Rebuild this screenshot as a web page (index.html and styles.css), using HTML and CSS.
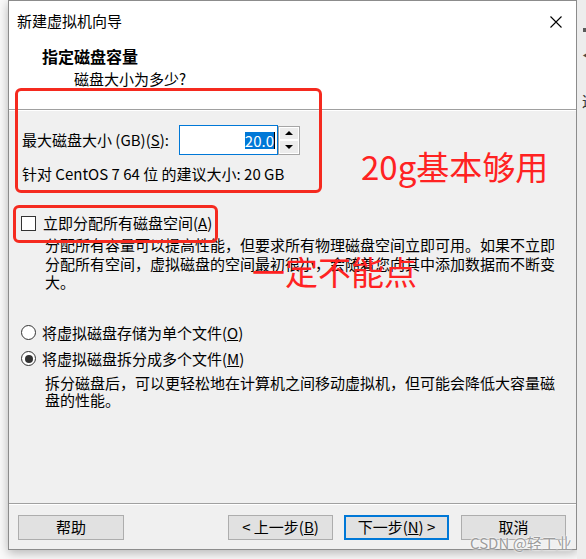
FILE: index.html
```html
<!DOCTYPE html>
<html lang="zh-CN">
<head>
    <meta charset="UTF-8">
    <meta name="viewport" content="width=device-width, initial-scale=1.0">
    <title>新建虚拟机向导</title>
    <link rel="stylesheet" href="styles.css">
</head>
<body>
    <div class="screen">
        <div class="dialog">
            <div class="titlebar">
                <span class="title">新建虚拟机向导</span>
                <svg class="close" width="12" height="12" viewBox="0 0 12 12">
                    <path d="M0.5 0.5L11.5 11.5M11.5 0.5L0.5 11.5" stroke="#000" stroke-width="1.1" fill="none"/>
                </svg>
            </div>
            <div class="header">
                <div class="heading">指定磁盘容量</div>
                <div class="subheading">磁盘大小为多少?</div>
            </div>

            <div class="content">
                <div class="size-row">
                    <span class="size-label">最大磁盘大小 (GB)(<u>S</u>):</span>
                    <div class="spin-input">
                        <span class="selected">20.0</span><span class="caret"></span>
                    </div>
                    <div class="spin-buttons">
                        <span class="spin-btn"><span class="arrow up"></span></span>
                        <span class="spin-btn"><span class="arrow down"></span></span>
                    </div>
                </div>
                <div class="hint">针对 CentOS 7 64 位 的建议大小: 20 GB</div>

                <div class="option check-row">
                    <span class="checkbox"></span>立即分配所有磁盘空间(<u>A</u>)
                </div>
                <p class="desc">分配所有容量可以提高性能，但要求所有物理磁盘空间立即可用。如果不立即分配所有空间，虚拟磁盘的空间最初很小，会随着您向其中添加数据而不断变大。</p>

                <div class="option radio-row first">
                    <span class="radio"></span>将虚拟磁盘存储为单个文件(<u>O</u>)
                </div>
                <div class="option radio-row">
                    <span class="radio checked"></span>将虚拟磁盘拆分成多个文件(<u>M</u>)
                </div>
                <p class="desc split">拆分磁盘后，可以更轻松地在计算机之间移动虚拟机，但可能会降低大容量磁盘的性能。</p>
            </div>

            <div class="footer">
                <button class="btn">帮助</button>
                <span class="spacer"></span>
                <button class="btn">&lt; 上一步(<u>B</u>)</button>
                <button class="btn default">下一步(<u>N</u>) &gt;</button>
                <button class="btn cancel">取消</button>
            </div>
        </div>

        <div class="behind">
            <span class="bit dot"></span>
            <span class="bit tri">◀</span>
            <span class="bit ch">这</span>
        </div>

        <!-- red annotations drawn over the screenshot -->
        <div class="mark box-size"></div>
        <div class="mark box-alloc"></div>
        <div class="note note-size">20g基本够用</div>
        <div class="note note-alloc">一定不能点</div>
        <div class="watermark">CSDN @轻工业</div>
    </div>
</body>
</html>
```

FILE: styles.css
```css
body {
    margin: 0;
    font-family: "Noto Sans CJK SC", "Noto Sans", sans-serif;
    font-size: 15px;
    color: #000;
    background-color: #fafafa;
}
.screen {
    position: relative;
    display: flex;
    width: 586px;
    height: 559px;
    overflow: hidden;
}
.dialog {
    display: flex;
    flex-direction: column;
    flex-shrink: 0;
    box-sizing: border-box;
    width: 569px;
    height: 550px;
    margin-left: 8px;
    border: 1px solid #8c8c8c;
    background-color: #f0f0f0;
    box-shadow: 0 3px 10px rgba(0,0,0,0.28);
}
.titlebar {
    display: flex;
    align-items: center;
    justify-content: space-between;
    height: 40px;
    padding: 0 14px 0 8px;
    background-color: #fff;
    line-height: 18px;
}
.close {
    display: block;
    margin-top: 1px;
}
.header {
    padding: 6px 0 21px 0;
    background-color: #fff;
    border-bottom: 1px solid #a0a0a0;
}
.heading {
    padding-left: 33px;
    font-size: 16px;
    font-weight: bold;
    line-height: 18px;
}
.subheading {
    margin-top: 5px;
    padding-left: 65px;
    line-height: 18px;
}
.content {
    flex: 1;
    padding: 0 12px;
    box-shadow: inset 0 1px 0 #fff;
}
.size-row {
    display: flex;
    align-items: center;
    height: 30px;
    margin-top: 15px;
}
.size-label {
    width: 157px;
    margin-left: 1px;
    line-height: 18px;
}
.spin-input {
    display: flex;
    align-items: center;
    justify-content: flex-end;
    box-sizing: border-box;
    width: 99px;
    height: 30px;
    padding-right: 2px;
    background-color: #fff;
    border: 1px solid #0078d7;
}
.selected {
    background-color: #0078d7;
    color: #fff;
    line-height: 17px;
}
.caret {
    width: 1px;
    height: 17px;
    background-color: #000;
}
.spin-buttons {
    display: flex;
    flex-direction: column;
    box-sizing: border-box;
    width: 22px;
    height: 29px;
    border: 1px solid #a5a5a5;
    background-color: #fff;
}
.spin-btn {
    display: flex;
    align-items: center;
    justify-content: center;
    flex: 1;
    margin: 1px;
    background-color: #ececec;
}
.arrow {
    width: 0;
    height: 0;
    border-left: 4px solid transparent;
    border-right: 4px solid transparent;
}
.arrow.up {
    border-bottom: 4px solid #000;
}
.arrow.down {
    border-top: 4px solid #000;
}
.hint {
    margin-top: 10px;
    margin-left: 1px;
    line-height: 18px;
}
.option {
    display: flex;
    align-items: center;
    line-height: 18px;
}
.check-row {
    margin-top: 31px;
}
.checkbox {
    box-sizing: border-box;
    width: 15px;
    height: 15px;
    margin-right: 7px;
    background-color: #fff;
    border: 1px solid #333;
}
.desc {
    margin: 4px 0 0 0;
    padding-left: 24px;
    line-height: 18.5px;
}
.desc.split {
    margin-top: 6px;
    line-height: 17px;
}
.radio-row {
    margin-top: 8px;
}
.radio-row.first {
    margin-top: 32px;
}
.radio {
    display: flex;
    align-items: center;
    justify-content: center;
    box-sizing: border-box;
    width: 15px;
    height: 15px;
    margin-right: 6px;
    border: 1px solid #333;
    border-radius: 50%;
    background-color: #fff;
}
.radio.checked::after {
    content: "";
    width: 8px;
    height: 8px;
    border-radius: 50%;
    background-color: #333;
}
.footer {
    display: flex;
    align-items: center;
    height: 46px;
    padding: 11px 10px 10px 9px;
    box-sizing: border-box;
    border-top: 1px solid #a0a0a0;
    box-shadow: inset 0 1px 0 #fff;
}
.spacer {
    flex: 1;
}
.btn {
    flex-shrink: 0;
    box-sizing: border-box;
    width: 105px;
    height: 25px;
    padding: 0;
    margin-left: 11px;
    font-family: inherit;
    font-size: 15px;
    line-height: 18px;
    color: #000;
    background-color: #e1e1e1;
    border: 1px solid #adadad;
}
.btn:first-child {
    width: 106px;
    margin-left: 0;
}
.btn.default {
    border: 2px solid #0078d7;
}
.btn.cancel {
    margin-left: 12px;
}
.behind {
    display: flex;
    flex-direction: column;
    flex: 1;
    min-width: 0;
    overflow: hidden;
    padding-left: 5px;
    background-color: #ededed;
    color: #555;
}
.bit {
    display: block;
    line-height: 16px;
    white-space: nowrap;
}
.dot {
    width: 4px;
    height: 4px;
    margin: 28px 0 0 1px;
    background-color: #5a5a5a;
}
.tri {
    margin-top: 14px;
    font-size: 14px;
    color: #4a4a4a;
}
.ch {
    margin-top: 31px;
    font-size: 15px;
    color: #333;
}
.mark {
    position: absolute;
    box-sizing: border-box;
    border: 3px solid #f52a1f;
    border-radius: 6px;
}
.box-size {
    left: 15px;
    top: 88px;
    width: 307px;
    height: 105px;
}
.box-alloc {
    left: 13px;
    top: 205px;
    width: 205px;
    height: 38px;
}
.note {
    position: absolute;
    font-size: 33px;
    line-height: 33px;
    color: #ff2222;
    white-space: nowrap;
}
.note-size {
    left: 361px;
    top: 150px;
}
.note-alloc {
    left: 252px;
    top: 255px;
}
.watermark {
    position: absolute;
    left: 470px;
    top: 534px;
    font-size: 15px;
    line-height: 18px;
    color: #9c9c9c;
    text-shadow: 0 0 2px #fff, 0 0 2px #fff;
    white-space: nowrap;
}
```
